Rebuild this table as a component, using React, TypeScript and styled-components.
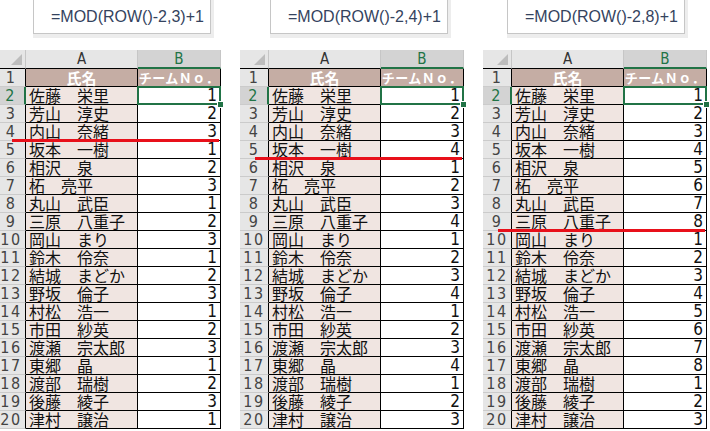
import React from 'react';
import styled, { createGlobalStyle } from 'styled-components';

/* Three Excel-like sheets showing MOD(ROW()-2,n)+1 team numbering */

const GlobalStyle = createGlobalStyle`
  html, body {
    margin: 0;
    padding: 0;
    background: #ffffff;
  }
  body {
    width: 710px;
    height: 431px;
    overflow: hidden;
  }
`;

const ROW_H = 18;
const HEAD_H = 19;
const SHEET_TOP = 50;

const NARROW = `"Liberation Sans Narrow", "DejaVu Sans Condensed", "Liberation Sans", sans-serif`;
const JP = `"Noto Sans CJK JP", "Noto Sans", sans-serif`;

const Page = styled.div`
  display: flex;
  gap: 19px;
  margin-left: -3px;
  width: 716px;
  height: 431px;
  overflow: hidden;
`;

const Panel = styled.div`
  position: relative;
  flex: none;
  width: 224px;
  display: flex;
  flex-direction: column;
`;

/* formula bar */
const FormulaStrip = styled.div<{ $offset: number }>`
  margin-left: ${p => p.$offset}px;
  width: 181px;
  height: 38px;
  padding: 0 3px 4px 0;
  box-sizing: border-box;
  background: #ededed;
`;

const FormulaBox = styled.div`
  height: 34px;
  box-sizing: border-box;
  background: #ffffff;
  border: 1px solid #c6c6c6;
  border-top: none;
  padding: 8px 0 0 17px;
  font-family: "Liberation Sans", Arial, sans-serif;
  font-size: 16px;
  color: #34435e;
  white-space: nowrap;
`;

/* sheet grid */
const Sheet = styled.div`
  display: grid;
  grid-template-columns: 29px 112px 83px;
  grid-template-rows: ${HEAD_H}px repeat(20, ${ROW_H}px);
  margin-top: ${SHEET_TOP - 38}px;
`;

const Corner = styled.div`
  position: relative;
  background: #e6e6e6;
  border-right: 1px solid #c6c6c6;
  border-bottom: 1px solid #000;
  box-sizing: border-box;

  &::after {
    content: '';
    position: absolute;
    right: 3px;
    bottom: 3px;
    width: 0;
    height: 0;
    border-left: 11px solid transparent;
    border-bottom: 11px solid #bdbdbd;
  }
`;

const ColHead = styled.div<{ $sel?: boolean }>`
  box-sizing: border-box;
  background: ${p => (p.$sel ? '#d3d3d3' : '#e6e6e6')};
  color: ${p => (p.$sel ? '#217346' : '#333')};
  border-right: 1px solid #c6c6c6;
  border-bottom: ${p => (p.$sel ? '2px solid #217346' : '1px solid #000')};
  font-family: ${NARROW};
  font-size: 15px;
  line-height: ${HEAD_H - 1}px;
  text-align: center;
`;

const RowHead = styled.div<{ $sel?: boolean }>`
  box-sizing: border-box;
  background: ${p => (p.$sel ? '#d3d3d3' : '#e6e6e6')};
  color: ${p => (p.$sel ? '#217346' : '#444')};
  border-bottom: 1px solid #cbcbcb;
  border-right: ${p => (p.$sel ? '2px solid #217346' : '1px solid #000')};
  font-family: ${NARROW};
  font-size: 16px;
  letter-spacing: 1.5px;
  line-height: ${ROW_H}px;
  text-align: center;
`;

const NameCell = styled.div<{ $head?: boolean }>`
  box-sizing: border-box;
  background: ${p => (p.$head ? '#c5ada4' : '#f0e5e1')};
  color: ${p => (p.$head ? '#ffffff' : '#111')};
  border-right: 1px solid #000;
  border-bottom: 1px solid #000;
  font-family: ${JP};
  font-size: ${p => (p.$head ? 15 : 16)}px;
  font-weight: ${p => (p.$head ? 700 : 400)};
  line-height: ${ROW_H - 1}px;
  text-align: ${p => (p.$head ? 'center' : 'left')};
  padding-left: ${p => (p.$head ? 0 : 3)}px;
  white-space: nowrap;
`;

const TeamCell = styled.div<{ $head?: boolean; $sel?: boolean }>`
  position: relative;
  box-sizing: border-box;
  background: ${p => (p.$head ? '#c5ada4' : '#ffffff')};
  color: ${p => (p.$head ? '#ffffff' : '#111')};
  border-right: 1px solid #000;
  border-bottom: 1px solid #000;
  font-family: ${p => (p.$head ? JP : NARROW)};
  font-size: ${p => (p.$head ? 13 : 17)}px;
  font-weight: ${p => (p.$head ? 700 : 400)};
  letter-spacing: ${p => (p.$head ? 0.5 : 0)}px;
  line-height: ${ROW_H - 1}px;
  text-align: ${p => (p.$head ? 'center' : 'right')};
  padding-right: ${p => (p.$head ? 0 : 3)}px;
  white-space: nowrap;

  ${p =>
    p.$sel &&
    `
    &::after {
      content: '';
      position: absolute;
      top: -1px;
      left: -1px;
      right: -1px;
      bottom: -1px;
      border: 2px solid #217346;
    }
    &::before {
      content: '';
      position: absolute;
      right: -4px;
      bottom: -4px;
      width: 5px;
      height: 5px;
      background: #217346;
      border: 1px solid #fff;
      z-index: 2;
    }
  `}
`;

/* red separator drawn over the sheet */
const RedLine = styled.div<{ $row: number }>`
  position: absolute;
  left: 15px;
  right: 2px;
  top: ${p => SHEET_TOP + HEAD_H + p.$row * ROW_H - 2}px;
  height: 3px;
  background: #e8101a;
  z-index: 3;
`;

const names = [
  '佐藤　栄里',
  '芳山　淳史',
  '内山　奈緒',
  '坂本　一樹',
  '相沢　泉',
  '柘　亮平',
  '丸山　武臣',
  '三原　八重子',
  '岡山　まり',
  '鈴木　伶奈',
  '結城　まどか',
  '野坂　倫子',
  '村松　浩一',
  '市田　紗英',
  '渡瀬　宗太郎',
  '東郷　晶',
  '渡部　瑞樹',
  '後藤　綾子',
  '津村　譲治',
];

const panels = [
  { n: 3, offset: 36 },
  { n: 4, offset: 30 },
  { n: 8, offset: 24 },
];

function SheetPanel({ n, offset }: { n: number; offset: number }) {
  return (
    <Panel>
      <FormulaStrip $offset={offset}>
        <FormulaBox>=MOD(ROW()-2,{n})+1</FormulaBox>
      </FormulaStrip>
      <Sheet>
        <Corner />
        <ColHead>A</ColHead>
        <ColHead $sel>B</ColHead>

        <RowHead>1</RowHead>
        <NameCell $head>氏名</NameCell>
        <TeamCell $head>チームＮｏ．</TeamCell>

        {names.map((name, i) => (
          <React.Fragment key={i}>
            <RowHead $sel={i === 0}>{i + 2}</RowHead>
            <NameCell>{name}</NameCell>
            <TeamCell $sel={i === 0}>{(i % n) + 1}</TeamCell>
          </React.Fragment>
        ))}
      </Sheet>
      <RedLine $row={n + 1} />
    </Panel>
  );
}

export default function App() {
  return (
    <>
      <GlobalStyle />
      <Page>
        {panels.map(p => (
          <SheetPanel key={p.n} n={p.n} offset={p.offset} />
        ))}
      </Page>
    </>
  );
}
